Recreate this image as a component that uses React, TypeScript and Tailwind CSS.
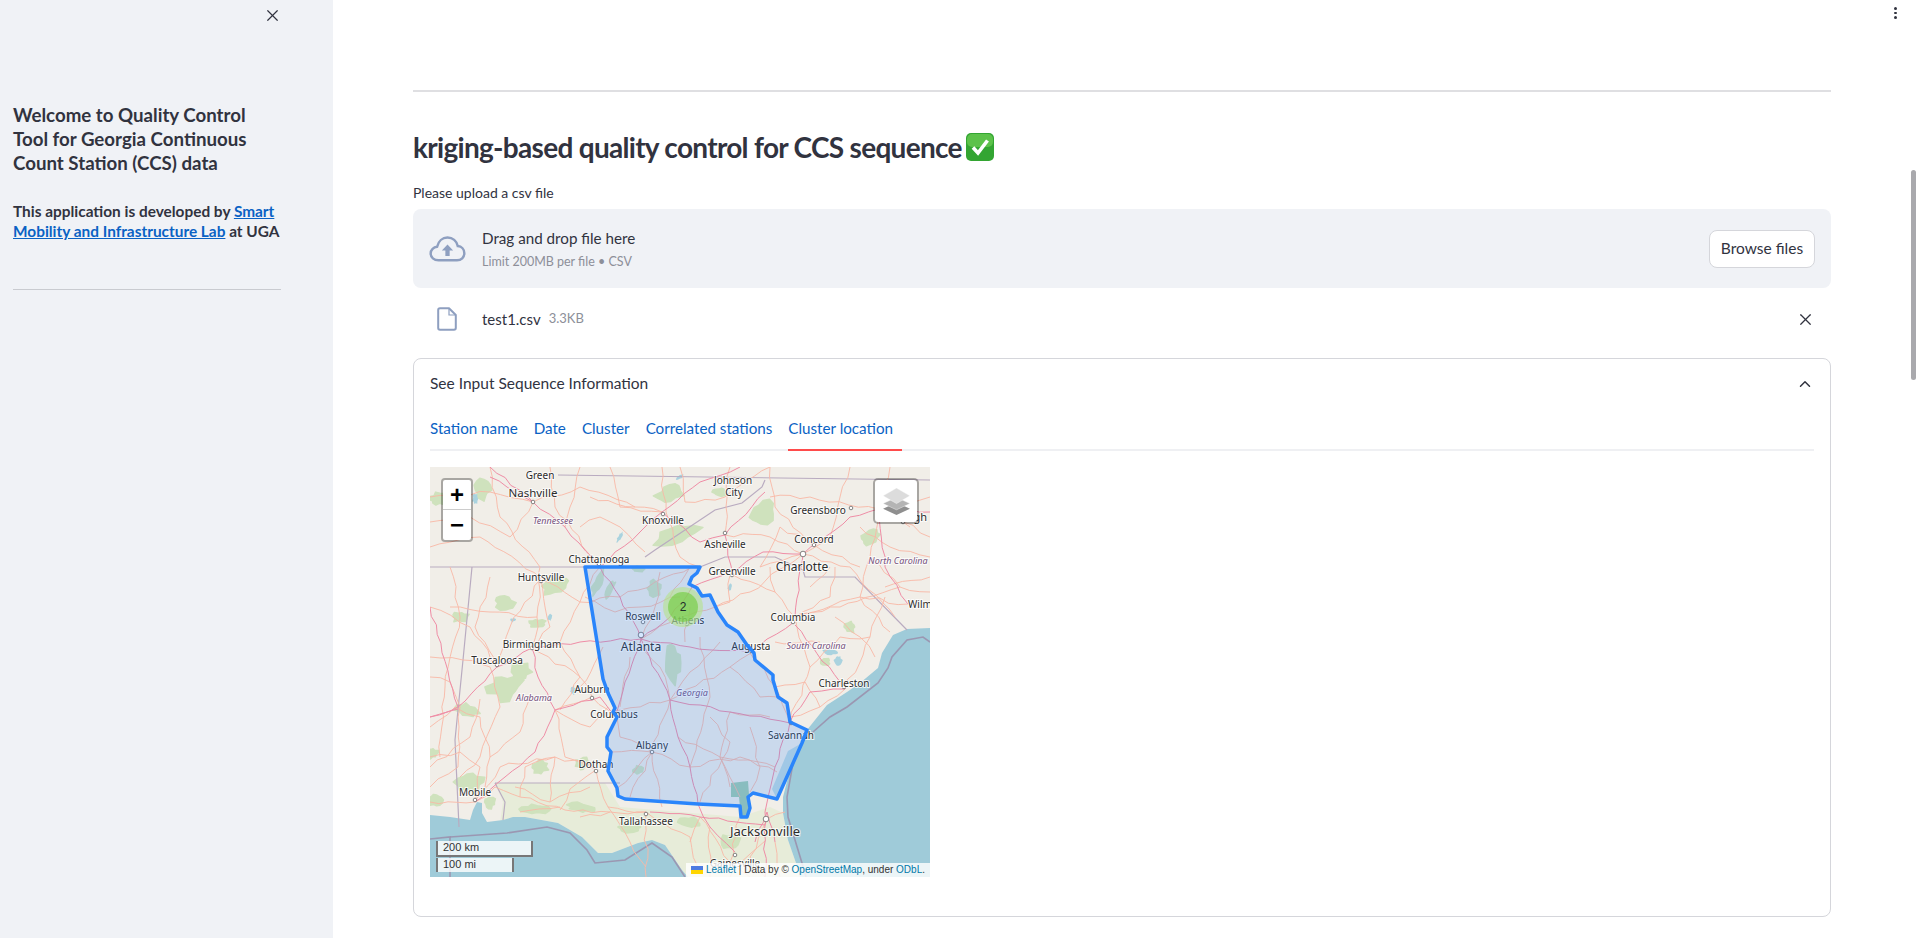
import React from 'react';
import { X, ChevronUp } from 'lucide-react';

const sans = '[font-family:Lato,sans-serif]';

const georgia =
  '155,100 270,100 267,106 262,110 259,117 267,121 272,129 280,128 288,145 297,158 308,165 317,178 324,186 325,193 343,208 343,213 348,230 357,236 360,255 377,263 372,276 347,332 323,326 318,330 320,341 317,350 311,350 310,339 268,337 195,332 188,329 187,321 178,304 181,285 177,280 177,270 187,250 183,245 185,241 178,226 173,212';

const eastSea =
  '500,161 477,162 463,168 452,186 448,201 430,216 417,225 397,238 377,263 370,280 360,303 353,330 353,346 358,373 366,396 370,410 500,410';

const gulfSea =
  '0,348 20,350 40,353 43,343 47,335 52,336 52,346 57,355 73,353 83,350 95,350 128,356 152,370 168,386 182,386 208,376 222,373 235,378 252,403 258,410 0,410';

const floridaTint =
  '65,316 175,316 190,340 310,350 340,340 353,346 358,373 366,396 370,410 258,410 252,403 235,378 222,373 208,376 182,386 168,386 152,370 128,356 95,350 70,356 73,335';

// small deterministic noise so the hand-traced lines don't look ruled
const noise = (n: number) => {
  const v = Math.sin(n * 12.9898) * 43758.5453;
  return v - Math.floor(v);
};

const wiggle = (line: string, seed: number, amp = 2.2) => {
  const pts = line.split(' ').map((p) => p.split(',').map(Number));
  const out: string[] = [];
  pts.forEach(([x, y], i) => {
    out.push(`${x},${y}`);
    const next = pts[i + 1];
    if (!next) return;
    const dx = next[0] - x;
    const dy = next[1] - y;
    const len = Math.hypot(dx, dy);
    const steps = Math.floor(len / 9);
    for (let s = 1; s < steps; s++) {
      const t = s / steps;
      const off = (noise(seed * 7 + i * 13 + s) - 0.5) * 2 * amp;
      out.push(`${(x + dx * t - (dy / len) * off).toFixed(1)},${(y + dy * t + (dx / len) * off).toFixed(1)}`);
    }
  });
  return out.join(' ');
};

const blob = (cx: number, cy: number, rx: number, ry: number, rot: number, seed: number) => {
  const r = (rot * Math.PI) / 180;
  const pts: string[] = [];
  for (let i = 0; i < 14; i++) {
    const a = (i / 14) * Math.PI * 2;
    const k = 0.65 + noise(seed + i * 3.1) * 0.6;
    const px = Math.cos(a) * rx * k;
    const py = Math.sin(a) * ry * k;
    pts.push(`${(cx + px * Math.cos(r) - py * Math.sin(r)).toFixed(1)},${(cy + px * Math.sin(r) + py * Math.cos(r)).toFixed(1)}`);
  }
  return pts.join(' ');
};

const forests: [number, number, number, number, number][] = [
  [245, 68, 24, 9, -15], [240, 26, 16, 9, -25], [332, 46, 15, 12, -40], [75, 136, 11, 7, 15],
  [125, 120, 16, 7, -25], [168, 116, 4, 13, 25], [180, 122, 3, 9, 25], [225, 121, 7, 8, 0],
  [243, 196, 8, 19, 0], [52, 23, 8, 10, 0], [208, 102, 6, 3, 0], [75, 220, 17, 13, 0],
  [90, 205, 10, 9, 0], [37, 243, 12, 6, 15], [40, 315, 15, 10, 0], [5, 333, 7, 6, 0],
  [110, 300, 9, 7, -25], [2, 286, 6, 5, 0], [107, 156, 8, 4, 0], [152, 296, 6, 6, 0],
  [208, 303, 5, 4, 0], [105, 342, 15, 5, 0], [60, 335, 5, 6, 0], [8, 32, 9, 6, 0],
  [440, 70, 10, 6, -30], [420, 160, 5, 6, 0], [395, 195, 5, 4, 0], [290, 25, 7, 4, 0],
  [30, 150, 8, 5, 0], [470, 30, 6, 4, 0], [150, 340, 14, 4, 10], [260, 355, 12, 5, 10],
  [300, 375, 10, 8, 0], [200, 360, 14, 5, 0],
];

const lakes: [number, number, number, number, number][] = [
  [400, 185, 8, 3, 10], [408, 193, 4, 5, 0], [83, 153, 3, 2, 0], [143, 223, 3, 4, 0], [45, 32, 3, 5, 0],
  [250, 10, 4, 2, -30], [190, 70, 2, 6, 30], [120, 150, 2, 4, 0], [300, 120, 2, 5, 20],
];

// salmon secondary roads
const minorRoads = [
  '0,30 60,25 103,35 150,20 205,40 232,45', '60,0 70,50 110,100 108,160 102,181', '150,0 140,40 135,60',
  '232,0 236,45 250,90 270,100', '300,0 296,40 295,68 340,70 373,87', '420,0 410,30 400,70 373,87',
  '500,30 448,42 440,90 470,120 500,125', '0,80 50,70 111,112 150,135 190,130', '0,140 40,160 67,200',
  '0,190 33,193 60,200', '20,100 30,150 15,220 10,290', '67,200 80,160 111,112', '111,112 120,160 102,181',
  '102,181 150,210 162,230 185,250', '125,243 162,230', '125,243 135,290 166,303', '45,335 70,300 125,290',
  '0,300 40,270 50,232', '0,260 25,240 50,250 60,290 55,320', '166,303 178,340 216,345', '216,345 216,410',
  '222,285 190,270 187,250', '222,285 240,233', '222,285 200,330', '222,285 260,300', '260,300 310,290 347,305',
  '240,233 300,200 321,186', '300,245 290,290 300,320', '300,245 340,250', '200,190 190,240', '270,170 280,230 260,300',
  '211,172 250,150 285,140 320,125 373,87', '303,108 345,125 365,150 410,140 470,120', '365,150 430,130 478,137',
  '365,150 380,200 360,255', '415,222 440,170 455,130', '320,186 345,220 360,255', '415,222 390,240 360,250',
  '335,374 305,400 300,410', '270,350 300,395', '337,352 355,345', '150,350 180,345 216,345', '0,335 45,335 65,320 135,343 180,345',
  '430,60 460,80 500,90', '340,30 380,30 448,42', '330,100 373,87 420,100', '160,30 205,40', '170,100 150,135 130,175',
  '0,55 40,50 80,70 103,35', '120,0 125,40 170,100', '180,0 190,40 232,45', '250,0 255,35 295,30 340,0',
  '340,0 345,40 384,78 430,100', '384,78 350,60 330,100', '460,0 450,42', '480,60 473,55 500,70', '405,100 400,130 365,150',
  '440,90 430,130', '500,110 455,120', '260,100 240,130', '300,108 300,135 285,140', '345,125 340,100', '150,60 170,50 190,60 215,85',
  '0,210 20,215 30,240 28,300 0,320', '60,200 70,240 50,290 30,310', '100,230 90,265 60,290', '125,243 160,260 178,240',
  '130,175 150,210 130,243', '67,200 45,160 60,110', '20,140 60,145 107,150', '0,290 30,285 50,300 45,335', '90,330 95,300 125,290 165,300',
  '125,290 120,335', '85,320 120,335 160,320', '155,130 185,145 211,140 250,130', '190,130 225,115 262,100', '173,180 150,220',
  '211,172 225,140 230,105', '255,175 260,140', '290,175 260,205 240,233', '300,200 330,230 348,230', '180,245 240,233', '181,285 222,285',
  '187,321 222,285', '222,285 232,340', '248,270 290,290 310,330', '280,250 300,275 270,335', '290,290 345,300', '320,260 330,300 320,325',
  '240,233 230,200 205,175', '405,150 430,170 445,190', '380,200 410,170 440,170', '390,240 375,215 345,220', '345,175 390,175',
  '380,120 400,100', '420,100 465,150', '430,130 460,165', '178,340 200,375 216,400', '216,345 260,370 268,400', '270,350 260,375',
  '310,350 300,395 320,410', '337,352 320,390 335,410', '345,375 350,410', '90,345 130,340', '130,343 140,322 166,303', '280,360 280,410',
];

// pink trunk roads
const majorRoads = [
  '211,172 240,150 262,120 300,105 333,85 373,87 420,50 448,42 500,45', '211,172 150,175 102,181',
  '211,172 190,130 170,100', '170,100 135,60 103,35 60,10', '170,100 210,65 232,45 270,15 310,0', '232,45 270,75 295,68 335,25',
  '295,68 303,108', '373,87 365,150', '364,155 320,185', '211,172 260,180 320,185', '211,172 240,233 300,245 360,256',
  '240,233 248,270 260,300 268,337 280,360 305,385', '102,181 67,200 28,240 0,250', '102,181 108,210 125,243 105,285 75,310 45,335',
  '211,172 195,215 185,250', '365,158 415,222', '220,345 270,350 335,358', '360,255 345,300 335,345 335,410',
  '360,255 380,225 415,222', '448,42 455,100 478,137', '28,240 0,140', '337,345 325,375', '337,345 345,375',
  '0,250 28,242', '60,0 103,35', '125,243 170,230 185,250',
];

const borders = [
  '0,100 155,100', '128,8 500,13', '42,100 33,193 25,273 29,360', '65,316 190,316', '65,316 75,335 73,353',
  '270,100 295,90 345,90 373,103 375,110 425,110 477,163', '215,90 225,83 255,63 285,43 312,36 332,20 335,13',
];

const seaBorders = [
  '20,370 77,366 117,360 140,366 157,383 165,396 195,393 222,376 242,390 255,410', '0,372 20,370 20,410',
  '500,175 493,170 477,173 462,190 458,201 448,216 417,240 400,250 383,265 373,273 363,296 357,330 358,350 372,396 376,410',
];

const cities: [number, number][] = [
  [103, 35], [304, 27], [233, 47], [421, 41], [384, 78], [295, 66], [169, 97], [111, 114], [302, 108],
  [213, 155], [257, 157], [363, 155], [102, 181], [67, 198], [321, 184], [414, 220], [162, 231],
  [361, 256], [222, 285], [166, 304], [45, 333], [216, 347], [305, 388], [184, 246], [473, 55],
];

type LabelProps = { x: number; y: number; size?: number; italic?: boolean; anchor?: 'middle' | 'start' | 'end'; fill?: string; children: string };

const Label = ({ x, y, size = 10, italic, anchor = 'middle', fill = '#2c2c2c', children }: LabelProps) => (
  <text
    x={x}
    y={y}
    fontSize={size}
    fontStyle={italic ? 'italic' : 'normal'}
    textAnchor={anchor}
    fill={fill}
    stroke="#ffffff"
    strokeOpacity={0.75}
    strokeWidth={2}
    paintOrder="stroke"
    fontFamily="'Noto Sans', sans-serif"
  >
    {children}
  </text>
);

const MapDrawing = () => (
  <svg viewBox="0 0 500 410" className="block h-[410px] w-[500px]">
    <rect width="500" height="410" fill="#f1eee8" />
    <polygon points={floridaTint} fill="#e7ecd9" />
    {forests.map(([cx, cy, rx, ry, rot], i) => (
      <polygon key={i} points={blob(cx, cy, rx, ry, rot, i + 1)} fill="#cfe2bd" stroke="#cfe2bd" strokeWidth={1.5} strokeLinejoin="round" />
    ))}
    {lakes.map(([cx, cy, rx, ry, rot], i) => (
      <polygon key={i} points={blob(cx, cy, rx, ry, rot, i + 40)} fill="#aad3df" />
    ))}
    <polygon points="301,316 318,314 320,341 318,350 311,350 309,330 301,330" fill="#9fcbb0" />
    <polygon points={eastSea} fill="#9fcbd9" />
    <polygon points={gulfSea} fill="#9fcbd9" />
    <polygon points="372,276 347,332 342,322 358,284" fill="#a9d2de" fillOpacity={0.75} />
    {borders.map((p) => (
      <polyline key={p} points={p} fill="none" stroke="#b9abc0" strokeWidth={1.2} />
    ))}
    {seaBorders.map((p) => (
      <polyline key={p} points={p} fill="none" stroke="#9a91ad" strokeWidth={1.6} strokeOpacity={0.9} />
    ))}
    {minorRoads.map((p, i) => (
      <polyline key={p} points={wiggle(p, i + 1)} fill="none" stroke="#f8b8a6" strokeWidth={0.9} strokeLinejoin="round" />
    ))}
    {majorRoads.map((p, i) => (
      <polyline key={p} points={wiggle(p, i + 200, 1.4)} fill="none" stroke="#ef8da6" strokeWidth={1} strokeLinejoin="round" />
    ))}
    {cities.map(([cx, cy]) => (
      <circle key={`${cx}-${cy}`} cx={cx} cy={cy} r={1.8} fill="#ffffff" stroke="#666666" strokeWidth={0.8} />
    ))}
    <circle cx={211} cy={168} r={2.8} fill="#ffffff" stroke="#666666" strokeWidth={0.8} />
    <circle cx={373} cy={87} r={2.8} fill="#ffffff" stroke="#666666" strokeWidth={0.8} />
    <circle cx={336} cy={352} r={2.8} fill="#ffffff" stroke="#666666" strokeWidth={0.8} />

    <Label x={110} y={12}>Green</Label>
    <Label x={103} y={30} size={11.5}>Nashville</Label>
    <Label x={303} y={17}>Johnson</Label>
    <Label x={304} y={29}>City</Label>
    <Label x={123} y={57} size={9} italic fill="#75507b">Tennessee</Label>
    <Label x={233} y={57}>Knoxville</Label>
    <Label x={388} y={47}>Greensboro</Label>
    <Label x={384} y={76}>Concord</Label>
    <Label x={295} y={81}>Asheville</Label>
    <Label x={169} y={96}>Chattanooga</Label>
    <Label x={111} y={114}>Huntsville</Label>
    <Label x={302} y={108}>Greenville</Label>
    <Label x={372} y={104} size={12}>Charlotte</Label>
    <Label x={468} y={97} size={9} italic fill="#75507b">North Carolina</Label>
    <Label x={497} y={54} anchor="end" size={11}>Raleigh</Label>
    <Label x={213} y={153}>Roswell</Label>
    <Label x={258} y={157}>Athens</Label>
    <Label x={363} y={154}>Columbia</Label>
    <Label x={478} y={141} anchor="start">Wilm</Label>
    <Label x={102} y={181}>Birmingham</Label>
    <Label x={67} y={197}>Tuscaloosa</Label>
    <Label x={211} y={184} size={12}>Atlanta</Label>
    <Label x={321} y={183}>Augusta</Label>
    <Label x={386} y={182} size={9} italic fill="#75507b">South Carolina</Label>
    <Label x={414} y={220}>Charleston</Label>
    <Label x={162} y={226}>Auburn</Label>
    <Label x={104} y={234} size={9} italic fill="#75507b">Alabama</Label>
    <Label x={262} y={229} size={9} italic fill="#75507b">Georgia</Label>
    <Label x={184} y={251}>Columbus</Label>
    <Label x={361} y={272}>Savannah</Label>
    <Label x={222} y={282}>Albany</Label>
    <Label x={166} y={301}>Dothan</Label>
    <Label x={45} y={329}>Mobile</Label>
    <Label x={216} y={358}>Tallahassee</Label>
    <Label x={335} y={369} size={13}>Jacksonville</Label>
    <Label x={305} y={400}>Gainesville</Label>

    <polygon
      points={georgia}
      fill="#3388ff"
      fillOpacity={0.2}
      stroke="#2a85fb"
      strokeWidth={3.5}
      strokeLinejoin="round"
    />
    <circle cx={253} cy={140} r={20} fill="#b5e28c" fillOpacity={0.6} />
    <circle cx={253} cy={140} r={15} fill="#6ecc39" fillOpacity={0.6} />
    <text x={253} y={144} fontSize={12} textAnchor="middle" fill="#1f2a2a" fontFamily="'Liberation Sans', sans-serif">
      2
    </text>
  </svg>
);

const LayersIcon = () => (
  <svg width="29" height="29" viewBox="0 0 28 28">
    <path d="M14 15 L27 21 L14 27 L1 21 Z" fill="#8f8f8f" />
    <path d="M14 10 L27 16 L14 22 L1 16 Z" fill="#b4b4b4" stroke="#ffffff" strokeWidth={0.4} />
    <path d="M14 1 L27 8.5 L14 16 L1 8.5 Z" fill="#dcdcdc" stroke="#ffffff" strokeWidth={0.4} />
  </svg>
);

const FoliumMap = () => (
  <div className="relative h-[410px] w-[500px] overflow-hidden">
    <MapDrawing />
    {/* zoom control */}
    <div className="absolute left-[11px] top-[11px] flex w-[32px] flex-col overflow-hidden rounded border-2 border-black/30 bg-white bg-clip-padding [font-family:'Liberation_Sans',sans-serif] text-[24px] font-bold leading-[29px] text-black">
      <div className="h-[30px] border-b border-[#cccccc] text-center">+</div>
      <div className="h-[30px] text-center">−</div>
    </div>
    {/* layers control */}
    <div className="absolute left-[443px] top-[11px] flex h-[46px] w-[46px] items-center justify-center rounded-[5px] border-2 border-black/30 bg-white bg-clip-padding">
      <LayersIcon />
    </div>
    {/* scale */}
    <div className="absolute bottom-[5px] left-[6px] flex flex-col gap-px [font-family:'Liberation_Sans',sans-serif] text-[11px] leading-[13px] text-[#333333]">
      <div className="h-[16px] w-[97px] border-2 border-t-0 border-[#777777] bg-white/80 pl-[5px]">200 km</div>
      <div className="h-[14px] w-[78px] border-x-2 border-[#777777] bg-white/80 pl-[5px]">100 mi</div>
    </div>
    {/* attribution */}
    <div className="absolute bottom-0 right-0 flex h-[14px] items-center gap-[3px] bg-white/80 pl-[5px] pr-[5px] [font-family:'Liberation_Sans',sans-serif] text-[10px] leading-[14px] text-[#333333]">
      <svg width="12" height="8" viewBox="0 0 12 8">
        <rect width="12" height="4" fill="#4c7be1" />
        <rect y="4" width="12" height="4" fill="#ffd500" />
      </svg>
      <span>
        <span className="text-[#0078a8]">Leaflet</span> | Data by © <span className="text-[#0078a8]">OpenStreetMap</span>, under{' '}
        <span className="text-[#0078a8]">ODbL</span>.
      </span>
    </div>
  </div>
);

const tabs = ['Station name', 'Date', 'Cluster', 'Correlated stations', 'Cluster location'];

export default function App() {
  return (
    <div className={`relative flex h-[938px] w-[1917px] overflow-hidden bg-white text-[#31333f] ${sans}`}>
      <aside className="h-full w-[333px] shrink-0 bg-[#f0f2f6] pl-[13px] pr-[52px]">
        <div className="flex justify-end pt-[6px]">
          <X size={19} strokeWidth={1.5} className="mr-[-1px] text-[#31333f]" />
        </div>
        <h2 className="mt-[78px] text-[18.7px] font-bold leading-[24px]">
          Welcome to Quality Control Tool for Georgia Continuous Count Station (CCS) data
        </h2>
        <p className="mt-[26px] text-[15.4px] font-bold leading-[20px]">
          This application is developed by{' '}
          <a className="text-[#0a62c4] underline">Smart Mobility and Infrastructure Lab</a> at UGA
        </p>
        <div className="mt-[48px] h-px bg-[#c9cbd0]" />
      </aside>

      <main className="min-w-0 flex-1 pl-[80px] pr-[86px] pt-[90px]">
        <div className="h-[2px] bg-[#dfdfe2]" />
        <div className="mt-[37px] flex items-center gap-[3px]">
          <h1 className="text-[28px] font-bold leading-[36px] tracking-[-0.7px]">kriging-based quality control for CCS sequence</h1>
          <svg width="30" height="30" viewBox="0 0 30 30">
            <rect x="1" y="1" width="28" height="28" rx="5" fill="#33a532" />
            <rect x="2" y="2" width="26" height="13" rx="5" fill="#5cc24a" />
            <path d="M8 15.5 L13 21 L22.5 8.5" fill="none" stroke="#ffffff" strokeWidth="3.6" />
          </svg>
        </div>

        <div className="mt-[19px] text-[14px] leading-[18px]">Please upload a csv file</div>
        <div className="mt-[7px] flex h-[79px] items-center rounded-lg bg-[#f0f2f6] pl-[16px] pr-[16px]">
          <svg width="37" height="26" viewBox="0 0 24 17" className="shrink-0 text-[#8e9fc0]" fill="none">
            <path
              d="M6.2 15.9 C3.1 15.9 1 13.9 1 11.4 C1 9 2.9 7.2 5.2 7 C6 3.4 8.7 1 12 1 C15.4 1 18 3.4 18.7 6.6 C21.2 6.8 23 8.7 23 11.2 C23 13.9 21 15.9 18.2 15.9 Z"
              stroke="currentColor"
              strokeWidth="1.6"
            />
            <path d="M12 5.5 L15.7 9.5 L13.4 9.5 L13.4 13 L10.6 13 L10.6 9.5 L8.3 9.5 Z" fill="currentColor" />
          </svg>
          <div className="ml-[16px] flex-1">
            <div className="text-[15.2px] leading-[20px]">Drag and drop file here</div>
            <div className="mt-[6px] text-[12.5px] leading-[16px] text-[#8d8f99]">Limit 200MB per file • CSV</div>
          </div>
          <button className="h-[38px] w-[106px] rounded-lg border border-[#d5d6db] bg-white text-[15.5px]">Browse files</button>
        </div>

        <div className="mt-[19px] flex h-[24px] items-center pl-[24px] pr-[16px]">
          <svg width="20" height="24" viewBox="0 0 20 24" fill="none" className="shrink-0 text-[#8e9fc0]">
            <path
              d="M12 1.2 H3 C1.9 1.2 1.2 1.9 1.2 3 V21 C1.2 22.1 1.9 22.8 3 22.8 H17 C18.1 22.8 18.8 22.1 18.8 21 V8 Z"
              stroke="currentColor"
              strokeWidth="2"
              strokeLinejoin="round"
            />
            <path d="M12 1.2 V8 H18.8" stroke="currentColor" strokeWidth="1.2" />
          </svg>
          <span className="ml-[25px] text-[15px]">test1.csv</span>
          <span className="ml-[8px] text-[13px] text-[#8d8f99]">3.3KB</span>
          <X size={19} strokeWidth={1.5} className="ml-auto" />
        </div>

        <section className="mt-[27px] h-[559px] rounded-lg border border-[#d5d6db] px-[16px]">
          <div className="flex h-[50px] items-center justify-between">
            <span className="text-[15.5px]">See Input Sequence Information</span>
            <ChevronUp size={18} strokeWidth={2} />
          </div>
          <div className="mt-[6px] flex h-[36px] gap-[16px] border-b-2 border-[#eff0f3]">
            {tabs.map((t) => (
              <div
                key={t}
                className={`-mb-[2px] h-[36px] text-[15.2px] leading-[26px] text-[#0a62c4] ${
                  t === 'Cluster location' ? 'border-b-2 border-[#ff4b4b] pr-[9px]' : ''
                }`}
              >
                {t}
              </div>
            ))}
          </div>
          <div className="mt-[16px]">
            <FoliumMap />
          </div>
        </section>
      </main>

      {/* app menu dots and overlay scrollbar */}
      <div className="absolute left-[1894px] top-[7px] flex flex-col gap-[2px]">
        <span className="h-[2.5px] w-[2.5px] rounded-full bg-[#31333f]" />
        <span className="h-[2.5px] w-[2.5px] rounded-full bg-[#31333f]" />
        <span className="h-[2.5px] w-[2.5px] rounded-full bg-[#31333f]" />
      </div>
      <div className="absolute left-[1911px] top-[170px] h-[210px] w-[5px] rounded-full bg-[#a9a9ad]" />
    </div>
  );
}
